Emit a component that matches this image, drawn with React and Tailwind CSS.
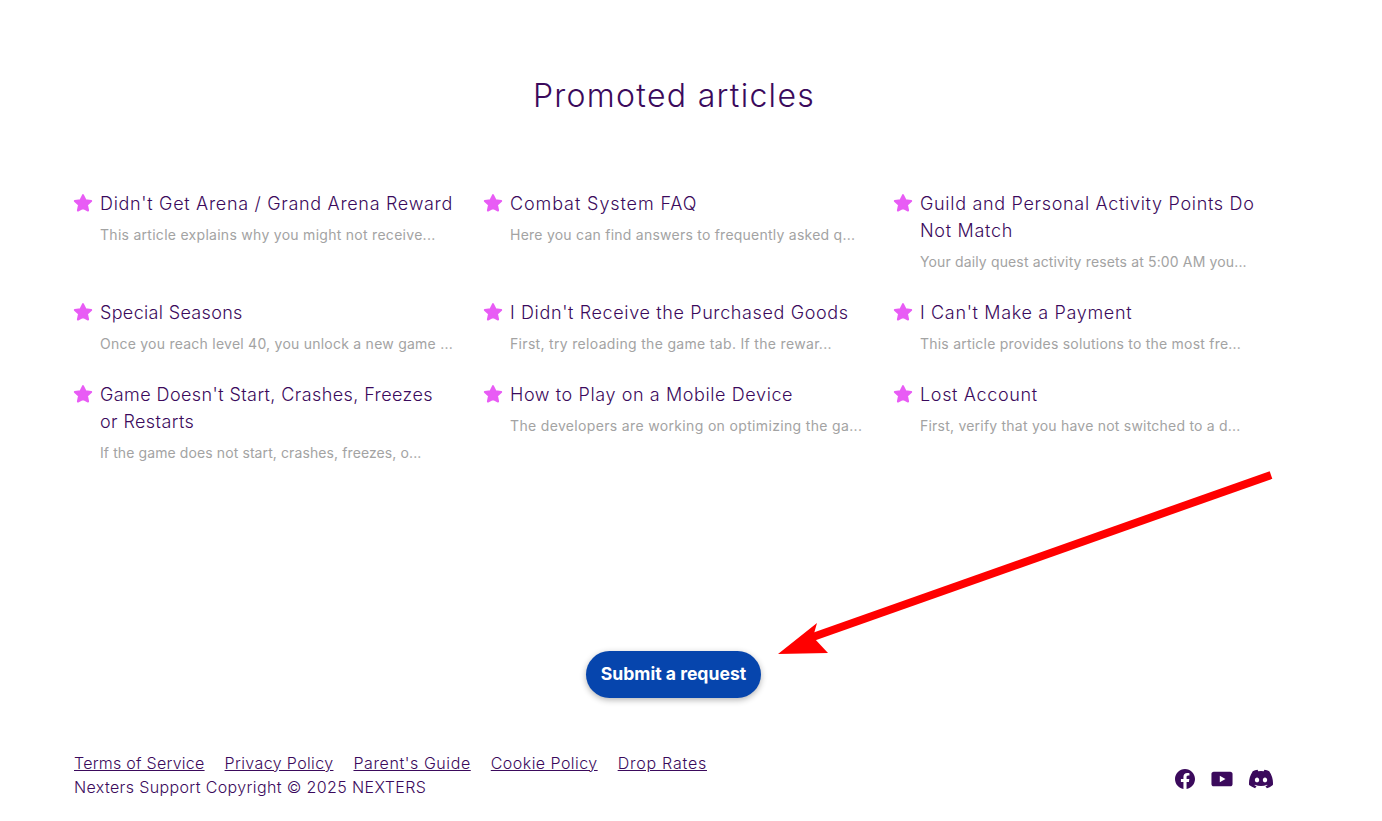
import React from "react";

const articles = [
  ["Didn't Get Arena / Grand Arena Reward", "This article explains why you might not receive...", "tracking-[0.69px]", "tracking-[0.28px]"],
  ["Combat System FAQ", "Here you can find answers to frequently asked q...", "tracking-[0.9px]", "tracking-[0.24px]"],
  ["Guild and Personal Activity Points Do Not Match", "Your daily quest activity resets at 5:00 AM you...", "tracking-[0.69px]", "tracking-[0.14px]"],
  ["Special Seasons", "Once you reach level 40, you unlock a new game ...", "tracking-[0.33px]", "tracking-[0.24px]"],
  ["I Didn't Receive the Purchased Goods", "First, try reloading the game tab. If the rewar...", "tracking-[0.63px]", "tracking-[0.32px]"],
  ["I Can't Make a Payment", "This article provides solutions to the most fre...", "tracking-[0.66px]", "tracking-[0.22px]"],
  ["Game Doesn't Start, Crashes, Freezes or Restarts", "If the game does not start, crashes, freezes, o...", "tracking-[0.41px]", "tracking-[0.1px]"],
  ["How to Play on a Mobile Device", "The developers are working on optimizing the ga...", "tracking-[0.6px]", "tracking-[0.34px]"],
  ["Lost Account", "First, verify that you have not switched to a d...", "tracking-[0.66px]", "tracking-[0.22px]"],
];

const links = [
  ["Terms of Service", "tracking-[0.25px]"],
  ["Privacy Policy", "tracking-[0.37px]"],
  ["Parent's Guide", "tracking-[0.58px]"],
  ["Cookie Policy", "tracking-[0.45px]"],
  ["Drop Rates", "tracking-[0.77px]"],
];

function Star() {
  return (
    <svg viewBox="0 0 24 24" className="w-[20px] h-[20px] shrink-0 mt-[3px] ml-[-1px]" fill="#e85cf5" stroke="#e85cf5" strokeWidth="2.4" strokeLinejoin="round">
      <path d="M12 2.500l3 6.200 6.800.9-5 4.600 1.300 6.800L12 17.700l-6.100 3.300 1.300-6.800-5-4.600 6.800-.9z" />
    </svg>
  );
}

export default function App() {
  return (
    <div className="relative h-[821px] bg-white text-[#3b0a5c] overflow-hidden font-['Inter','Liberation_Sans',sans-serif]">
      <div className="w-[1348px] px-[74px]">
        <h2 className="pt-[76px] text-center text-[32px] leading-[40px] font-light tracking-[1.3px] text-[#3b0a5c]">Promoted articles</h2>
        <div className="mt-[74px] grid grid-cols-[410px_410px_380px] gap-y-[27px]">
          {articles.map(([t, d, tt, dt]) => (
            <div key={t} className="flex gap-[7px]">
              <Star />
              <div className="w-[356px]">
                <div className={`text-[18px] leading-[27px] font-light ${tt}`}>{t}</div>
                <div className={`mt-[7px] text-[14px] leading-[21px] text-[#a3a3a3] whitespace-nowrap ${dt}`}>{d}</div>
              </div>
            </div>
          ))}
        </div>

        <div className="mt-[188px] flex justify-center">
          <button className="h-[47px] w-[175px] ml-[-1px] rounded-full bg-[#0645ad] text-white font-bold text-[17.600px] shadow-[0_2px_6px_rgba(0,0,0,0.3)]">Submit a request</button>
        </div>

        <footer className="mt-[53px] flex justify-between items-center">
          <div className="text-[16px] leading-[24px] font-light tracking-[0.37px]">
            <div className="flex gap-[20px]">
              {links.map(([l, c]) => <a key={l} className={`underline ${c}`}>{l}</a>)}
            </div>
            <div>Nexters Support Copyright © 2025 NEXTERS</div>
          </div>
          <div className="flex items-center gap-[16px] mt-[8px] mr-[1px]">
            <svg viewBox="0 0 24 24" className="w-[20px] h-[20px]" fill="#3b0a5c"><path d="M24 12.070C24 5.400 18.630 0 12 0S0 5.400 0 12.070C0 18.100 4.390 23.090 10.130 24v-8.440H7.080v-3.490h3.050V9.410c0-3.020 1.790-4.690 4.530-4.690 1.310 0 2.680.24 2.680.24v2.970h-1.510c-1.490 0-1.960.93-1.960 1.880v2.260h3.330l-.53 3.490h-2.800V24C19.610 23.090 24 18.100 24 12.070z" /></svg>
            <svg viewBox="0 0 24 24" className="w-[22px] h-[22px]" fill="#3b0a5c"><path d="M21 4H3C1.500 4 .5 5 .5 6.500v11C.5 19 1.500 20 3 20h18c1.500 0 2.500-1 2.500-2.500v-11C23.500 5 22.500 4 21 4zM9.600 15.600V8.400l6.200 3.600z" /></svg>
            <svg viewBox="0 0 24 24" className="w-[24px] h-[24px]" fill="#3b0a5c"><path d="M20.320 4.370A19.800 19.800 0 0 0 15.430 2.850a.07.07 0 0 0-.08.04c-.21.380-.44.860-.61 1.250a18.300 18.300 0 0 0-5.490 0 12.600 12.600 0 0 0-.62-1.250.08.08 0 0 0-.08-.04 19.700 19.700 0 0 0-4.880 1.520.07.07 0 0 0-.03.03C.53 9.050-.32 13.580.1 18.060c0 .02.01.04.03.06a19.900 19.900 0 0 0 5.990 3.030.08.08 0 0 0 .08-.03c.46-.63.870-1.290 1.230-1.990a.08.080 0 0 0-.04-.11 13.100 13.100 0 0 1-1.870-.89.08.08 0 0 1-.01-.13c.13-.09.25-.19.370-.29a.07.070 0 0 1 .08-.01c3.930 1.790 8.180 1.790 12.060 0a.07.070 0 0 1 .08.01c.12.100.25.200.37.290a.08.080 0 0 1-.01.130c-.6.350-1.220.640-1.870.890a.08.080 0 0 0-.04.110c.36.700.780 1.360 1.230 1.990a.08.080 0 0 0 .08.030 19.800 19.800 0 0 0 6-3.030.08.08 0 0 0 .03-.06c.5-5.180-.84-9.670-3.550-13.660a.06.06 0 0 0-.03-.03zM8.020 15.330c-1.180 0-2.160-1.090-2.160-2.420s.96-2.420 2.160-2.420c1.210 0 2.180 1.100 2.160 2.420 0 1.330-.96 2.420-2.160 2.420zm7.970 0c-1.180 0-2.150-1.090-2.150-2.420s.95-2.420 2.150-2.420c1.210 0 2.180 1.100 2.160 2.420 0 1.330-.950 2.420-2.160 2.420z" /></svg>
          </div>
        </footer>
      </div>

      <svg className="absolute left-0 top-0 pointer-events-none" width="1382" height="821">
        <line x1="1271" y1="475" x2="810" y2="638" stroke="#ff0000" strokeWidth="8" />
        <path d="M778 654 L817 623 L813 637 L828 653 Z" fill="#ff0000" />
      </svg>
    </div>
  );
}
